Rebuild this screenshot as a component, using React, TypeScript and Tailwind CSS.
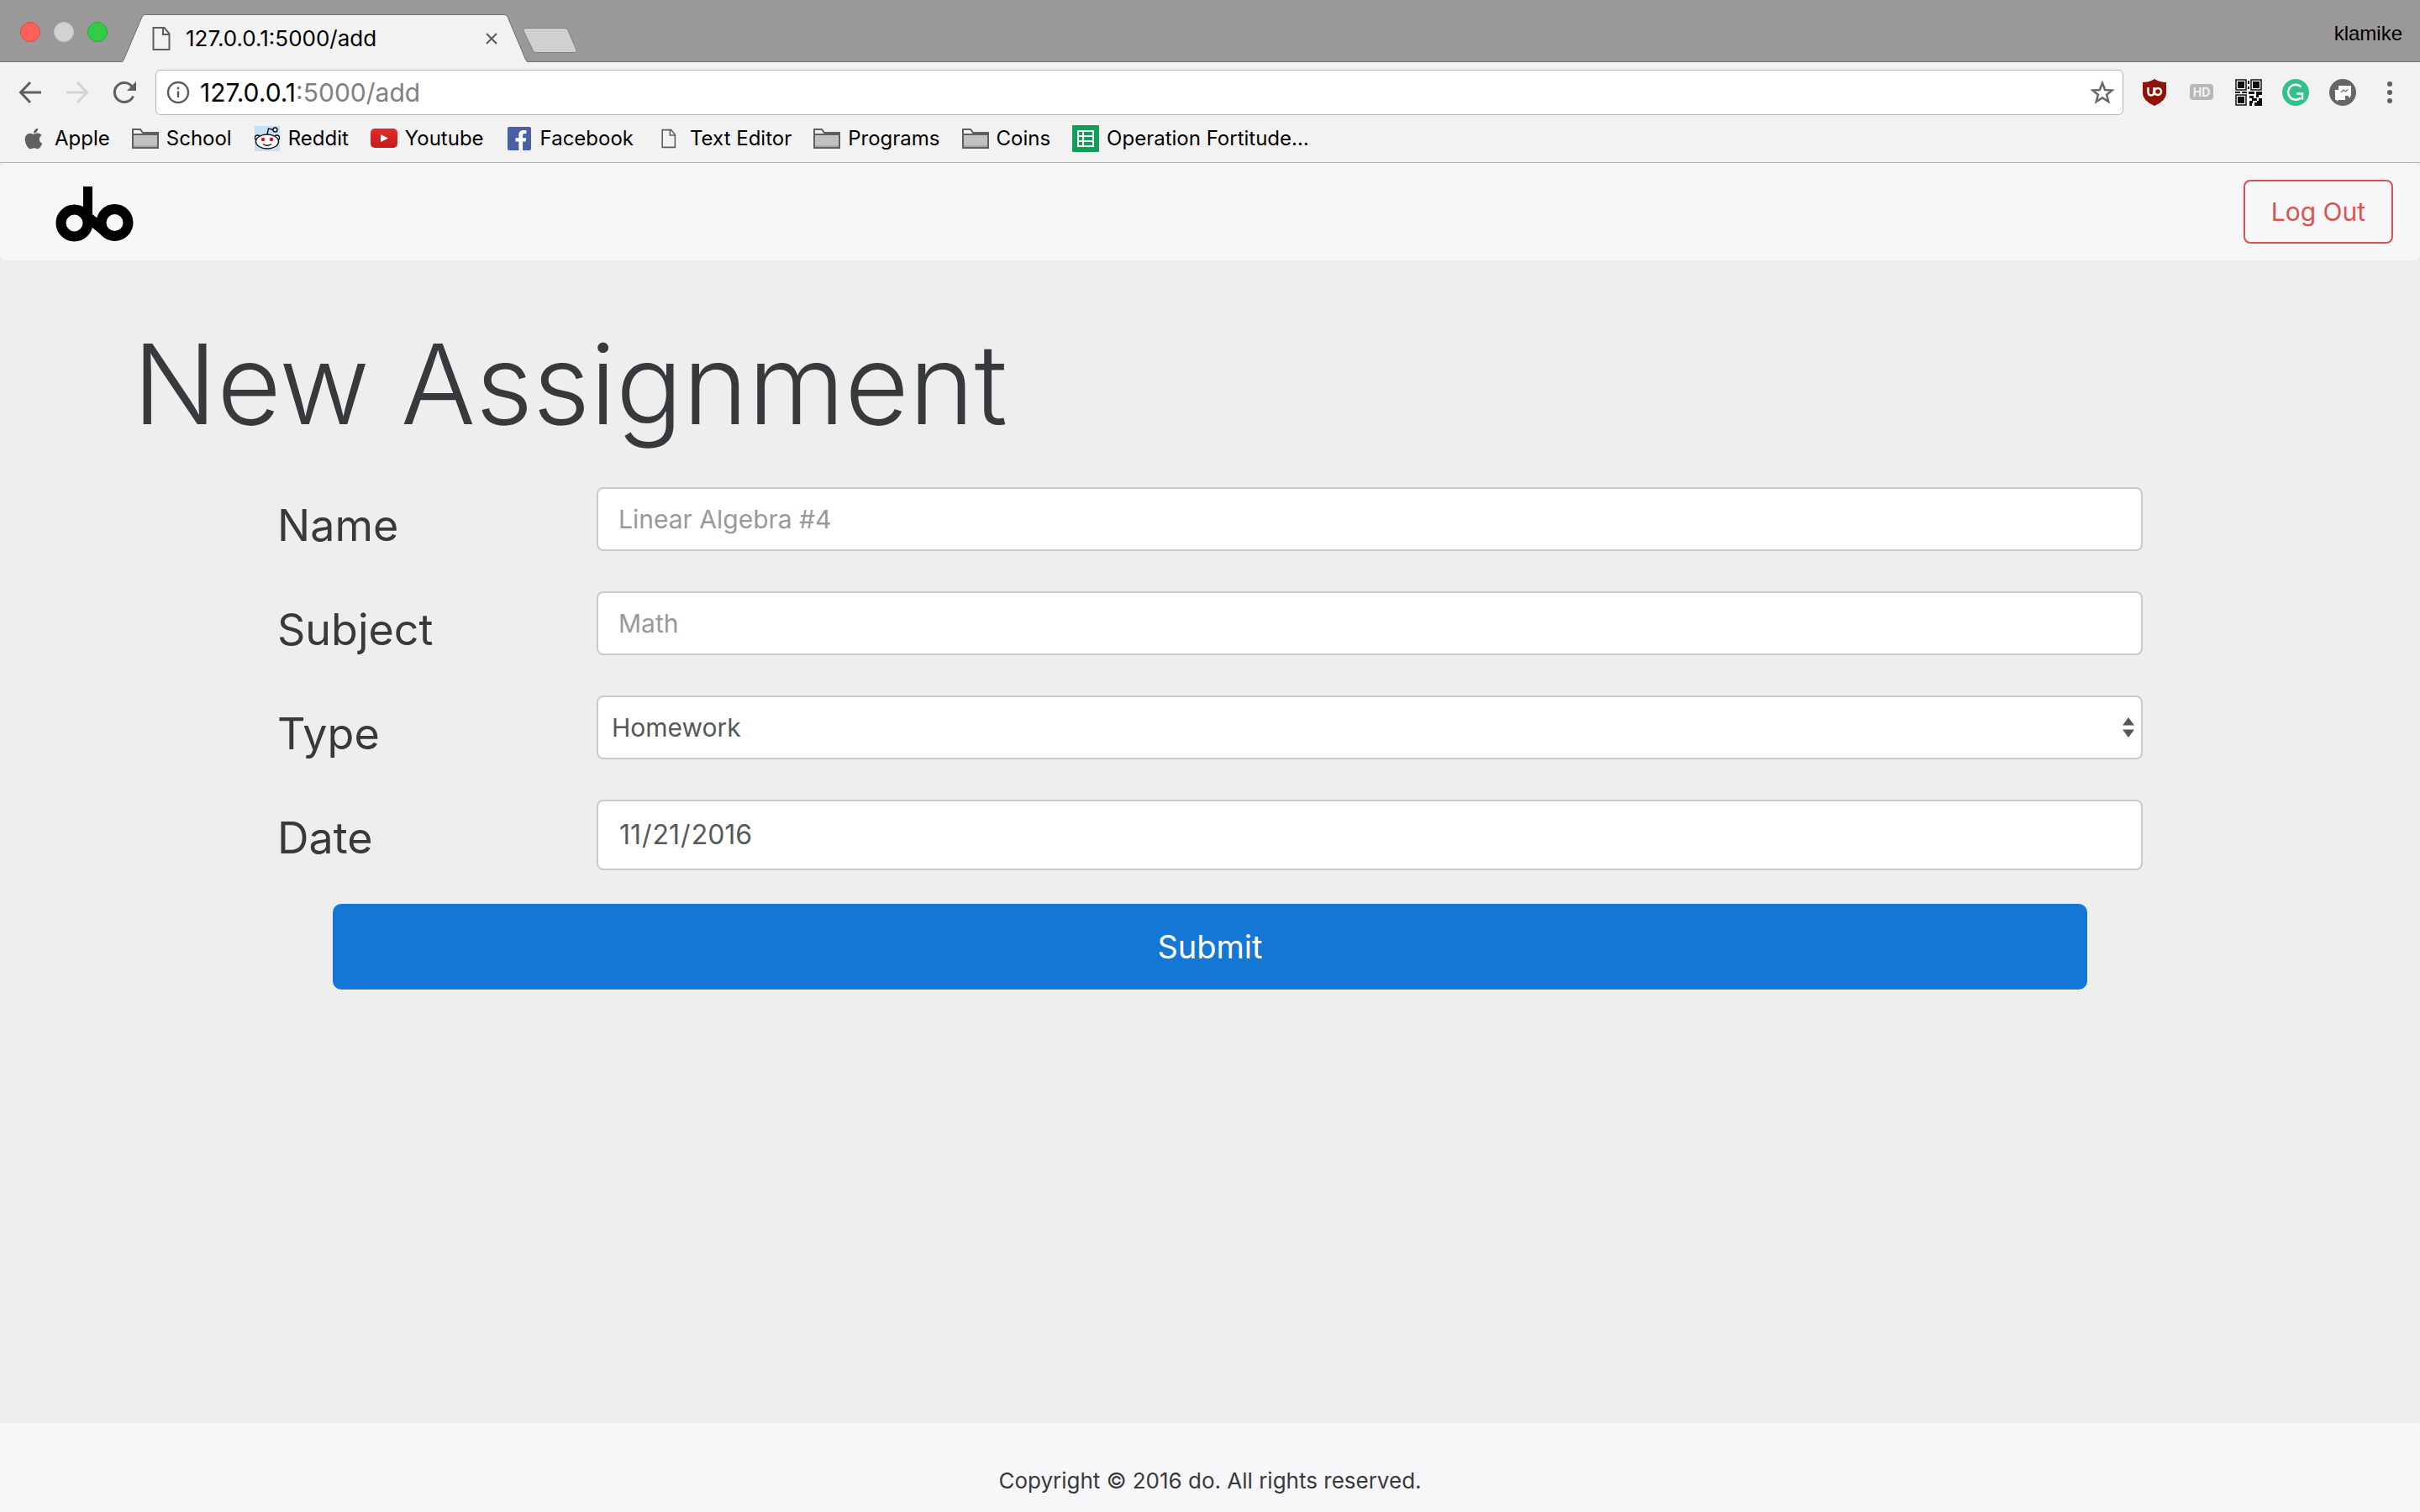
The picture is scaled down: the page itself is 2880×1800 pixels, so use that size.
import type { ReactNode } from "react";
import { FaApple, FaFacebookF } from "react-icons/fa";

const FolderIcon = () => (
  <svg viewBox="0 0 32 32" className="size-8">
    <path d="M1 27V5h9l3 4h18v18z" fill="#f4f4f4" stroke="#5f5f5f" strokeWidth="2" />
    <path d="M2 12h28v14H2z" fill="#c2c2c2" />
    <path d="M2 24h28v2H2z" fill="#a8a8a8" />
    <path d="M1 11h30" stroke="#5f5f5f" strokeWidth="2" />
  </svg>
);

const PageIcon = ({ className }: { className?: string }) => (
  <svg viewBox="0 0 22 30" className={className} fill="none" stroke="#5f5f5f" strokeWidth="2">
    <path d="M1.5 2h13l6 7v19h-19z" />
    <path d="M13 2v8h8" />
  </svg>
);

const RedditIcon = () => (
  <svg viewBox="0 0 32 32" className="size-8">
    <path d="M1 1h30v30H1z" fill="#c5dff7" />
    <g fill="#fff" stroke="#111" strokeWidth="1.4">
      <circle cx="4.5" cy="15" r="3" />
      <circle cx="27.5" cy="15" r="3" />
      <ellipse cx="16" cy="19.5" rx="13.5" ry="8.5" />
      <path d="M16 11l1.500-7 6 1.500" fill="none" />
      <circle cx="25.500" cy="5.500" r="2.500" />
    </g>
    <circle cx="11" cy="17" r="2.200" fill="#f00" />
    <circle cx="21" cy="17" r="2.200" fill="#f00" />
    <path d="M11 22.500q5 3.500 10 0" fill="none" stroke="#111" strokeWidth="1.400" />
  </svg>
);

const YoutubeIcon = () => (
  <svg viewBox="0 0 32 32" className="size-8">
    <defs>
      <linearGradient id="yt" x1="0" y1="0" x2="0" y2="1">
        <stop offset="0" stopColor="#e52d2b" />
        <stop offset="1" stopColor="#bf1a1c" />
      </linearGradient>
    </defs>
    <rect y="4" width="32" height="23" rx="5" fill="url(#yt)" />
    <path d="M12 11l9 4.500-9 4.500z" fill="#fff" />
  </svg>
);

const FacebookIcon = () => (
  <span className="flex size-7 items-end justify-end rounded-xs bg-[#4961a4]">
    <FaFacebookF className="size-6 text-white" />
  </span>
);

const SheetsIcon = () => (
  <svg viewBox="0 0 32 32" className="size-8">
    <rect width="32" height="32" rx="1" fill="#129d58" />
    <path d="M6 6h20v20H6z" fill="#fff" />
    <path d="M8 8h4v4H8zm6 0h10v4H14zM8 14h4v4H8zm6 0h10v4H14zM8 20h4v4H8zm6 0h10v4H14z" fill="#129d58" />
  </svg>
);

const ShieldIcon = () => (
  <svg viewBox="0 0 32 32" className="size-8">
    <path d="M16 0q6 4 14 4v13q0 9-14 15Q2 26 2 17V4q8 0 14-4z" fill="#8f130b" />
    <g fill="none" stroke="#fff" strokeWidth="2.400">
      <path d="M8.500 10v5.500q0 4 3.500 4t3.500-4V10" />
      <circle cx="20" cy="15" r="4" />
    </g>
  </svg>
);

const HdIcon = () => (
  <svg viewBox="0 0 32 32" className="size-8">
    <rect x="2" y="6" width="28" height="19" rx="4" fill="#b8b8b8" />
    <text x="16" y="21" textAnchor="middle" fontSize="14" className="fill-[#f2f2f2] font-bold">
      HD
    </text>
  </svg>
);

const QrIcon = () => (
  <svg viewBox="0 0 32 32" className="size-8">
    <path d="M0 0h32v32H0z" fill="#fff" />
    <g fill="none" stroke="#111" strokeWidth="1.500">
      <path d="M1 1h12v12H1zM19 1h12v12H19zM1 19h12v12H1z" />
    </g>
    <g fill="#111">
      <path d="M3 3h8v8H3zM21 3h8v8h-8zM3 21h8v8H3z" />
      <path d="M15 2h2v4h-2zM15 9h2v3h-2zM0 15h6v2H0zM8 15h6v2H8zM16 15h7v3h-7zM25 15h7v4h-4v3h-3zM17 20h5v3h4v3h-5v3h-4v-3h3v-3h-3zM28 23h4v3h-4zM17 29h3v3h-3zM23 28h3v-2h6v6h-9z" />
    </g>
  </svg>
);

const GrammarlyIcon = () => (
  <svg viewBox="0 0 32 32" className="size-8">
    <circle cx="16" cy="16" r="16" fill="#33c08a" />
    <path d="M22.500 9.500A9 9 0 1 0 22 22.500M17.500 17.500h6.500v7" fill="none" stroke="#fff" strokeWidth="2.400" />
  </svg>
);

const ChatIcon = () => (
  <svg viewBox="0 0 32 32" className="size-8">
    <circle cx="16" cy="16" r="16" fill="#666" />
    <path d="M6 13h5v7h8v5h-8l-2 2v-2H7V14z" fill="#fff" />
    <path d="M11 8h15v12h-1v3l-3-3H11z" fill="#fff" />
    <path d="M14 16l3-3 2.500 2 3-2.500" fill="none" stroke="#666" strokeWidth="1.200" />
  </svg>
);

const MenuIcon = () => (
  <svg viewBox="0 0 32 32" className="size-8" fill="#5f5f5f">
    <circle cx="16" cy="6" r="3" />
    <circle cx="16" cy="16" r="3" />
    <circle cx="16" cy="26" r="3" />
  </svg>
);

const Logo = () => (
  <svg viewBox="0 0 93 67" className="h-[67px] w-[93px]" role="img" aria-label="do">
    <g fill="none" stroke="#000" strokeWidth="12">
      <circle cx="22.500" cy="44.500" r="16" />
      <circle cx="70.500" cy="44" r="16" />
    </g>
    <path d="M33 1h11v33l6 5 6 4v17L44 50l-6-2-5-16z" />
  </svg>
);

const bookmarks: { label: string; icon: ReactNode }[] = [
  { label: "Apple", icon: <FaApple className="size-7 text-[#606060]" /> },
  { label: "School", icon: <FolderIcon /> },
  { label: "Reddit", icon: <RedditIcon /> },
  { label: "Youtube", icon: <YoutubeIcon /> },
  { label: "Facebook", icon: <FacebookIcon /> },
  { label: "Text Editor", icon: <PageIcon className="h-6" /> },
  { label: "Programs", icon: <FolderIcon /> },
  { label: "Coins", icon: <FolderIcon /> },
  { label: "Operation Fortitude…", icon: <SheetsIcon /> },
];

const extensions = [
  { label: "uBlock Origin", icon: <ShieldIcon /> },
  { label: "HD", icon: <HdIcon /> },
  { label: "QR code", icon: <QrIcon /> },
  { label: "Grammarly", icon: <GrammarlyIcon /> },
  { label: "Messages", icon: <ChatIcon /> },
  { label: "Menu", icon: <MenuIcon /> },
];

const TabStrip = () => (
  <div className="flex h-[74px] items-end border-b border-[#6f6f6f] bg-[#999]">
    <div className="flex gap-4 self-start pt-[26px] pl-6">
      <span className="size-6 rounded-full border border-[#e2463f] bg-[#fe6159]" />
      <span className="size-6 rounded-full border border-[#c4c4c4] bg-[#d2d2d2]" />
      <span className="size-6 rounded-full border border-[#1fae31] bg-[#33cb47]" />
    </div>
    <div className="relative -mb-px ml-[17px] flex h-[57px] w-[483px] items-center px-9">
      <svg viewBox="0 0 483 57" className="absolute inset-0">
        <path d="M0 57q2-1 3-4L24 3q1-2.500 3-2.500h429q2 0 3 2.500l21 50q1 3 3 4z" fill="#f2f2f2" />
        <path d="M0 56.500q2-1 3-4L24 3q1-2.500 3-2.500h429q2 0 3 2.500l21 49.500q1 3 3 4" fill="none" stroke="#6f6f6f" />
      </svg>
      <PageIcon className="relative h-[30px]" />
      <span className="relative ml-[18px] flex-1 text-[26px]">127.0.0.1:5000/add</span>
      <button aria-label="Close tab" className="relative">
        <svg viewBox="0 0 14 14" className="size-[14px]" stroke="#5a5a5a" strokeWidth="2">
          <path d="M1 1l12 12M13 1L1 13" />
        </svg>
      </button>
    </div>
    <button aria-label="New tab" className="relative -ml-[6px] mb-[9px]">
      <svg viewBox="0 0 66 31" className="h-[31px] w-[66px]">
        <path d="M3 .5h47q3 0 4 3l10 23q1 3-2 3H16q-3 0-4-3L1 3.500q-1-3 2-3z" fill="#d0d0d0" stroke="#808080" />
      </svg>
    </button>
    <span className="ml-auto self-start pt-6 pr-[21px] font-['Liberation_Sans',sans-serif] text-2xl">klamike</span>
  </div>
);

const Toolbar = () => (
  <div className="flex items-center gap-[21px] px-5 pt-[9px]">
    <div className="flex gap-6">
      <button aria-label="Back">
        <svg viewBox="0 0 32 32" className="size-8" fill="none" stroke="#5f5f5f" strokeWidth="3">
          <path d="M29 16H5M16 4L4.500 16 16 28" />
        </svg>
      </button>
      <button aria-label="Forward" disabled>
        <svg viewBox="0 0 32 32" className="size-8" fill="none" stroke="#d4d4d4" strokeWidth="3">
          <path d="M3 16h24M16 4l11.500 12L16 28" />
        </svg>
      </button>
      <button aria-label="Reload">
        <svg viewBox="0 0 32 32" className="size-8">
          <path d="M26.500 20.500A11.500 11.500 0 1 1 25 9" fill="none" stroke="#5f5f5f" strokeWidth="3" />
          <path d="M30 3v11H19z" fill="#5f5f5f" />
        </svg>
      </button>
    </div>
    <div className="flex h-[54px] flex-1 items-center rounded-md border border-[#b5b5b5] bg-white px-2">
      <svg viewBox="0 0 28 28" className="ml-1 size-7" fill="none" stroke="#5a5a5a" strokeWidth="2.400">
        <circle cx="14" cy="14" r="12" />
        <path d="M14 12.500V20M14 7.500v3" />
      </svg>
      <p className="ml-3 flex-1 text-[30px] leading-8">
        127.0.0.1<span className="text-[#808080]">:5000/add</span>
      </p>
      <button aria-label="Bookmark this page">
        <svg viewBox="0 0 32 32" className="size-8" fill="none" stroke="#6a6a6a" strokeWidth="2.600">
          <path d="M16 5l3.200 8 8.300.5-6.400 5.300 2.100 8.200-7.200-4.600L8.800 27l2.100-8.200-6.400-5.300 8.300-.5z" />
        </svg>
      </button>
    </div>
    <div className="flex gap-6">
      {extensions.map((ext) => (
        <button key={ext.label} aria-label={ext.label}>
          {ext.icon}
        </button>
      ))}
    </div>
  </div>
);

const BookmarksBar = () => (
  <nav className="flex h-14 items-center gap-[26px] px-6">
    {bookmarks.map((bookmark) => (
      <a key={bookmark.label} href="#" className="flex items-center gap-[9px] text-2xl">
        <span className="flex size-8 items-center justify-center">{bookmark.icon}</span>
        {bookmark.label}
      </a>
    ))}
  </nav>
);

const Field = ({ id, label, children }: { id: string; label: string; children: ReactNode }) => (
  <div className="mb-10 grid grid-cols-6">
    <label htmlFor={id} className="px-[30px] pt-2 text-[52px] leading-[76px]">
      {label}
    </label>
    <div className="col-span-5 px-[30px]">{children}</div>
  </div>
);

const inputClass =
  "block h-[76px] w-full rounded-lg border-2 border-[#cacaca] bg-white px-6 text-[30px] text-[#55595c] placeholder:text-[#999]";

const AssignmentForm = () => (
  <form className="px-[150px]">
    <Field id="name" label="Name">
      <input id="name" type="text" placeholder="Linear Algebra #4" className={inputClass} />
    </Field>
    <Field id="subject" label="Subject">
      <input id="subject" type="text" placeholder="Math" className={inputClass} />
    </Field>
    <Field id="type" label="Type">
      <div className="relative">
        <select
          id="type"
          className="block h-[76px] w-full appearance-none rounded-lg border-2 border-[#cacaca] bg-white px-4 text-[30px] text-[#55595c]"
        >
          <option>Homework</option>
        </select>
        <svg viewBox="0 0 14 24" className="pointer-events-none absolute top-[26px] right-[10px] h-6 w-[14px]" fill="#55595c">
          <path d="M7 0l7 9.500H0zM0 14.500h14L7 24z" />
        </svg>
      </div>
    </Field>
    <Field id="date" label="Date">
      <input
        id="date"
        type="date"
        defaultValue="2016-11-21"
        className="block h-[84px] w-full rounded-lg border-2 border-[#cacaca] bg-white px-6 text-[32px] text-[#55595c] [&::-webkit-calendar-picker-indicator]:hidden"
      />
    </Field>
    <div className="px-24">
      <button type="submit" className="h-[102px] w-full rounded-[10px] bg-[#1477d6] text-[38px] text-white">
        Submit
      </button>
    </div>
  </form>
);

export default function App() {
  return (
    <div className="flex min-h-screen flex-col bg-[#eee] font-[Inter,sans-serif] text-black">
      <header className="border-b border-[#b3b3b3] bg-[#f2f2f2]">
        <TabStrip />
        <Toolbar />
        <BookmarksBar />
      </header>
      <nav className="flex h-[116px] items-center justify-between rounded-lg bg-[#f7f7f9] pr-8 pl-[66px]">
        <a href="#" className="pt-1">
          <Logo />
        </a>
        <button className="h-[76px] rounded-lg border-2 border-[#d9534f] px-[31px] text-[30px] text-[#d9534f]">
          Log Out
        </button>
      </nav>
      <main className="flex-1 px-[150px] pt-16 text-[#373a3c]">
        <h1 className="mb-10 px-2 text-[132px] leading-[166px] font-light">New Assignment</h1>
        <AssignmentForm />
      </main>
      <footer className="bg-[#f7f7f9] pt-12 pb-4 text-center text-[26px] leading-[42px] text-[#373a3c]">
        Copyright © 2016 do. All rights reserved.
      </footer>
    </div>
  );
}
